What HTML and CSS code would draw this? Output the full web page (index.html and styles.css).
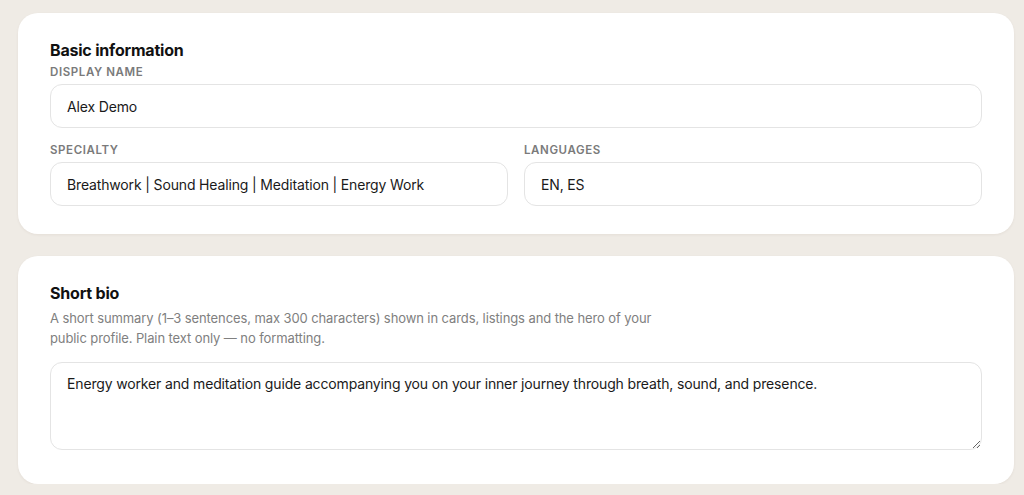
FILE: index.html
```html
<!DOCTYPE html>
<html lang="en">
<head>
    <meta charset="UTF-8">
    <meta name="viewport" content="width=device-width, initial-scale=1.0">
    <title>Profile settings</title>
    <link rel="stylesheet" href="styles.css">
</head>
<body>
    <main class="profile-form">
        <section class="card">
            <h2 class="card-title">Basic information</h2>
            <div class="field">
                <label class="field-label" for="display_name">Display name</label>
                <input class="text-input" id="display_name" type="text" value="Alex Demo">
            </div>
            <div class="field-row">
                <div class="field">
                    <label class="field-label" for="specialty">Specialty</label>
                    <input class="text-input" id="specialty" type="text" value="Breathwork | Sound Healing | Meditation | Energy Work">
                </div>
                <div class="field">
                    <label class="field-label" for="languages">Languages</label>
                    <input class="text-input" id="languages" type="text" value="EN, ES">
                </div>
            </div>
        </section>

        <section class="card">
            <h2 class="card-title">Short bio</h2>
            <p class="card-hint">A short summary (1–3 sentences, max 300 characters) shown in cards, listings and the hero of your public profile. Plain text only — no formatting.</p>
            <textarea class="text-area" id="short_bio" rows="3">Energy worker and meditation guide accompanying you on your inner journey through breath, sound, and presence.</textarea>
        </section>
    </main>
</body>
</html>
```

FILE: styles.css
```css
body {
    margin: 0;
    font-family: Inter, "Noto Sans", sans-serif;
    background-color: #efebe5;
    color: #111;
}
.profile-form {
    display: flex;
    flex-direction: column;
    gap: 22px;
    padding: 13px 10px 0 18px;
}
.card {
    background-color: #fff;
    border-radius: 20px;
    padding: 27px 32px 28px 32px;
    box-shadow: 0 1px 3px rgba(60, 40, 20, 0.06);
}
.card-title {
    margin: 0 0 5px 0;
    font-size: 16px;
    font-weight: 700;
    line-height: 20px;
    letter-spacing: -0.2px;
}
.field {
    display: flex;
    flex-direction: column;
    min-width: 0;
}
.field-label {
    font-size: 11.5px;
    font-weight: 600;
    letter-spacing: 0.6px;
    text-transform: uppercase;
    color: #7a7a7a;
    line-height: 14px;
    margin-bottom: 5px;
}
.field-row {
    display: grid;
    grid-template-columns: 1fr 1fr;
    gap: 16px;
    margin-top: 15px;
}
.text-input, .text-area {
    box-sizing: border-box;
    width: 100%;
    border: 1px solid #e4e4e4;
    border-radius: 12px;
    font-family: inherit;
    font-size: 14px;
    letter-spacing: -0.15px;
    color: #1a1a1a;
    background: #fff;
    outline: none;
}
.text-input {
    height: 44px;
    padding: 0 16px;
}
.card-hint {
    margin: 5px 0 14px 0;
    max-width: 620px;
    font-size: 13px;
    line-height: 20px;
    letter-spacing: -0.1px;
    color: #808080;
}
.text-area {
    display: block;
    height: 88px;
    padding: 11px 16px;
    line-height: 20px;
    resize: vertical;
    margin-bottom: 6px;
}
```
